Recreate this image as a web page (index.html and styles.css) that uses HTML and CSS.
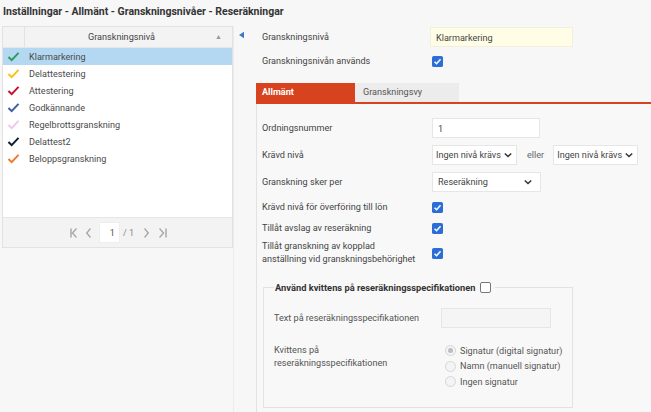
FILE: index.html
```html
<!DOCTYPE html>
<html lang="sv">
<head>
<meta charset="utf-8">
<title>Granskningsnivåer</title>
<link rel="stylesheet" href="styles.css">
</head>
<body>
<div class="title">Inställningar - Allmänt - Granskningsnivåer - Reseräkningar</div>
<div class="layout">
  <div class="left">
    <div class="grid">
      <div class="grid-head">
        <div class="icon-col"></div>
        <div class="head-col">Granskningsnivå<span class="sort">▲</span></div>
      </div>
      <div class="grid-body">
        <div class="row selected"><span class="chk" style="color:#2f9a5d"><svg viewBox="0 0 14 12" width="13" height="11"><path d="M1.5 6.5 L5 10 L12.5 2" fill="none" stroke="currentColor" stroke-width="2.2"/></svg></span>Klarmarkering</div>
        <div class="row"><span class="chk" style="color:#f3c41c"><svg viewBox="0 0 14 12" width="13" height="11"><path d="M1.5 6.5 L5 10 L12.5 2" fill="none" stroke="currentColor" stroke-width="2.2"/></svg></span>Delattestering</div>
        <div class="row"><span class="chk" style="color:#c8102e"><svg viewBox="0 0 14 12" width="13" height="11"><path d="M1.5 6.5 L5 10 L12.5 2" fill="none" stroke="currentColor" stroke-width="2.2"/></svg></span>Attestering</div>
        <div class="row"><span class="chk" style="color:#3c5ea8"><svg viewBox="0 0 14 12" width="13" height="11"><path d="M1.5 6.5 L5 10 L12.5 2" fill="none" stroke="currentColor" stroke-width="2.2"/></svg></span>Godkännande</div>
        <div class="row"><span class="chk" style="color:#f0c8ec"><svg viewBox="0 0 14 12" width="13" height="11"><path d="M1.5 6.5 L5 10 L12.5 2" fill="none" stroke="currentColor" stroke-width="2.2"/></svg></span>Regelbrottsgranskning</div>
        <div class="row"><span class="chk" style="color:#0c1d2b"><svg viewBox="0 0 14 12" width="13" height="11"><path d="M1.5 6.5 L5 10 L12.5 2" fill="none" stroke="currentColor" stroke-width="2.2"/></svg></span>Delattest2</div>
        <div class="row"><span class="chk" style="color:#ef7a2c"><svg viewBox="0 0 14 12" width="13" height="11"><path d="M1.5 6.5 L5 10 L12.5 2" fill="none" stroke="currentColor" stroke-width="2.2"/></svg></span>Beloppsgranskning</div>
      </div>
      <div class="pager">
        <svg class="pg first" viewBox="0 0 7 10" width="7" height="10"><path d="M1 0.5 V9.5 M6.5 0.5 L2.5 5 L6.5 9.5" fill="none" stroke="currentColor" stroke-width="1.5"/></svg>
        <svg class="pg prev" viewBox="0 0 5 10" width="5" height="10"><path d="M4.5 0.5 L0.8 5 L4.5 9.5" fill="none" stroke="currentColor" stroke-width="1.5"/></svg>
        <div class="pg-input">1</div>
        <span class="pg-total">/ 1</span>
        <svg class="pg next" viewBox="0 0 5 10" width="5" height="10"><path d="M0.5 0.5 L4.2 5 L0.5 9.5" fill="none" stroke="currentColor" stroke-width="1.5"/></svg>
        <svg class="pg last" viewBox="0 0 8 10" width="8" height="10"><path d="M7 0.5 V9.5 M0.5 0.5 L4.5 5 L0.5 9.5" fill="none" stroke="currentColor" stroke-width="1.5"/></svg>
      </div>
    </div>
  </div>
  <div class="splitter">
    <svg viewBox="0 0 6 8" width="5" height="8"><path d="M6 0 L0 4 L6 8 Z" fill="#3b78c9"/></svg>
  </div>
  <div class="right">
    <div class="top-form">
      <div class="frow">
        <div class="flabel">Granskningsnivå</div>
        <div class="input yellow">Klarmarkering</div>
      </div>
      <div class="frow">
        <div class="flabel">Granskningsnivån används</div>
        <span class="cb"><svg viewBox="0 0 12 12" width="11" height="11"><rect width="12" height="12" rx="2" fill="#2b6fd6"/><path d="M2.8 6.2 L5 8.4 L9.3 3.6" fill="none" stroke="#fff" stroke-width="1.7"/></svg></span>
      </div>
    </div>
    <div class="tabs">
      <div class="tab active">Allmänt</div>
      <div class="tab">Granskningsvy</div>
    </div>
    <div class="tab-content">
      <div class="crow">
        <div class="clabel">Ordningsnummer</div>
        <div class="input num">1</div>
      </div>
      <div class="crow">
        <div class="clabel">Krävd nivå</div>
        <div class="select s1">Ingen nivå krävs<svg class="chev" viewBox="0 0 10 6" width="8" height="6"><path d="M1 1 L5 5 L9 1" fill="none" stroke="#333" stroke-width="1.8"/></svg></div>
        <span class="eller">eller</span>
        <div class="select s1">Ingen nivå krävs<svg class="chev" viewBox="0 0 10 6" width="8" height="6"><path d="M1 1 L5 5 L9 1" fill="none" stroke="#333" stroke-width="1.8"/></svg></div>
      </div>
      <div class="crow">
        <div class="clabel">Granskning sker per</div>
        <div class="select s2">Reseräkning<svg class="chev" viewBox="0 0 10 6" width="8" height="6"><path d="M1 1 L5 5 L9 1" fill="none" stroke="#333" stroke-width="1.8"/></svg></div>
      </div>
      <div class="crow cbrow first">
        <div class="clabel">Krävd nivå för överföring till lön</div>
        <span class="cb"><svg viewBox="0 0 12 12" width="11" height="11"><rect width="12" height="12" rx="2" fill="#2b6fd6"/><path d="M2.8 6.2 L5 8.4 L9.3 3.6" fill="none" stroke="#fff" stroke-width="1.7"/></svg></span>
      </div>
      <div class="crow cbrow">
        <div class="clabel">Tillåt avslag av reseräkning</div>
        <span class="cb"><svg viewBox="0 0 12 12" width="11" height="11"><rect width="12" height="12" rx="2" fill="#2b6fd6"/><path d="M2.8 6.2 L5 8.4 L9.3 3.6" fill="none" stroke="#fff" stroke-width="1.7"/></svg></span>
      </div>
      <div class="crow cbrow">
        <div class="clabel">Tillåt granskning av kopplad<br>anställning vid granskningsbehörighet</div>
        <span class="cb"><svg viewBox="0 0 12 12" width="11" height="11"><rect width="12" height="12" rx="2" fill="#2b6fd6"/><path d="M2.8 6.2 L5 8.4 L9.3 3.6" fill="none" stroke="#fff" stroke-width="1.7"/></svg></span>
      </div>
      <fieldset class="fs">
        <legend>Använd kvittens på reseräkningsspecifikationen <span class="cb-empty"></span></legend>
        <div class="fsrow">
          <div class="fslabel">Text på reseräkningsspecifikationen</div>
          <div class="input disabled"></div>
        </div>
        <div class="fsrow radios-row">
          <div class="fslabel">Kvittens på<br>reseräkningsspecifikationen</div>
          <div class="radios">
            <div class="radio"><span class="rd on"></span>Signatur (digital signatur)</div>
            <div class="radio"><span class="rd"></span>Namn (manuell signatur)</div>
            <div class="radio"><span class="rd"></span>Ingen signatur</div>
          </div>
        </div>
      </fieldset>
    </div>
  </div>
</div>
</body>
</html>
```

FILE: styles.css
```css
* { box-sizing: border-box; }
html, body { margin: 0; padding: 0; }
body {
  background: #f7f7f7;
  font-family: Roboto, "Liberation Sans", Arial, sans-serif;
  font-size: 9.1px;
  color: #444;
  width: 651px;
  height: 412px;
  overflow: hidden;
}
.title {
  height: 26px;
  padding: 5px 0 0 3px;
  font-size: 10.5px;
  font-weight: 700;
  color: #333;
  white-space: nowrap;
}
.layout {
  display: flex;
  align-items: flex-start;
}
.left {
  width: 233px;
  flex: none;
  padding-left: 2px;
}
.grid {
  border: 1px solid #e2e2e2;
  background: #fff;
  height: 222px;
  display: flex;
  flex-direction: column;
}
.grid-head {
  display: flex;
  height: 21px;
  background: #f3f3f3;
  border-bottom: 1px solid #e6e6e6;
}
.icon-col {
  width: 22px;
  border-right: 1px solid #e2e2e2;
}
.head-col {
  flex: 1;
  display: flex;
  align-items: center;
  justify-content: center;
  padding-right: 14px;
  position: relative;
  color: #444;
}
.sort {
  position: absolute;
  right: 10px;
  top: 6px;
  font-size: 7px;
  color: #999;
}
.grid-body {
  flex: 1;
}
.row {
  height: 17px;
  display: flex;
  align-items: center;
  color: #4a4a4a;
  white-space: nowrap;
}
.row.selected { background: #b4d8f2; }
.chk {
  width: 26px;
  padding-left: 4px;
  display: flex;
  align-items: center;
}
.pager {
  height: 30px;
  background: #f3f3f3;
  border-top: 1px solid #e6e6e6;
  display: flex;
  align-items: center;
  justify-content: center;
  color: #aaa;
  padding-left: 2px;
}
.pg { color: #ababab; flex: none; }
.pg.prev { margin-left: 9px; }
.pg.next { margin-left: 10px; }
.pg.last { margin-left: 10px; }
.pg-input {
  width: 21px;
  height: 21px;
  background: #fff;
  border: 1px solid #eee;
  text-align: right;
  padding: 5px 4px 0 0;
  color: #555;
  margin-left: 8px;
}
.pg-total { color: #888; margin-left: 3px; }
.splitter {
  width: 23px;
  flex: none;
  height: 386px;
  border-left: 1px solid #ececec;
  padding: 5px 0 0 5px;
}
.right {
  flex: 1;
  min-width: 0;
}
.top-form {
  padding-top: 1px;
}
.frow {
  display: flex;
  align-items: center;
  height: 20px;
  margin-bottom: 4px;
}
.flabel {
  width: 174px;
  flex: none;
  padding-left: 6px;
  color: #444;
  white-space: nowrap;
}
.input {
  height: 20px;
  border: 1px solid #e6e6e6;
  background: #fff;
  padding: 5px 5px 0;
  color: #444;
  flex: none;
}
.input.yellow {
  width: 143px;
  background: #fffde6;
  border-color: #f0efe0;
}
.frow .cb { margin-left: 2px; }
.cb { display: inline-flex; flex: none; }
.tabs {
  margin-top: 12px;
  display: flex;
  height: 21px;
  border-bottom: 2px solid #d6431e;
}
.tab {
  height: 19px;
  padding: 4px 0 0 8px;
  background: #ececec;
  color: #555;
  width: 104px;
}
.tab.active {
  width: 99px;
  padding-left: 6px;
  background: #d6431e;
  color: #fff;
  font-weight: 700;
}
.tab-content {
  border-left: 1px solid #e2e2e2;
  padding-top: 14px;
  min-height: 320px;
  background: #f8f8f8;
}
.crow {
  display: flex;
  align-items: center;
  height: 20px;
  margin-bottom: 7px;
}
.clabel {
  width: 175px;
  flex: none;
  padding-left: 5px;
  color: #444;
  white-space: nowrap;
}
.input.num { width: 108px; }
.select {
  height: 20px;
  background: #fff;
  border: 1px solid #e6e6e6;
  display: flex;
  align-items: center;
  justify-content: space-between;
  padding: 0 4px 0 3px;
  color: #444;
  white-space: nowrap;
  flex: none;
}
.select.s1 { width: 85px; }
.select.s2 { width: 109px; padding-left: 5px; padding-right: 8px; }
.chev { flex: none; }
.eller { color: #666; margin: 0 9px 0 10px; }
.crow.cbrow {
  height: auto;
  min-height: 18px;
  margin-bottom: 3px;
}
.crow.cbrow.first { margin-top: -1px; }
.crow.cbrow .clabel {
  line-height: 13px;
}
.fs {
  margin: 16px 0 0 6px;
  width: 308px;
  height: 126px;
  border: 1px solid #e2e2e2;
  padding: 15px 10px 0 10px;
}
.fs legend {
  padding: 0 4px 0 1px;
  font-size: 9.3px;
  font-weight: 700;
  color: #333;
  display: flex;
  align-items: center;
  gap: 5px;
  white-space: nowrap;
}
.cb-empty {
  width: 11px;
  height: 11px;
  border: 1px solid #777;
  border-radius: 2px;
  background: #fff;
  display: inline-block;
}
.fsrow {
  display: flex;
  align-items: center;
}
.fslabel {
  width: 167px;
  flex: none;
  color: #555;
  line-height: 13px;
  white-space: nowrap;
}
.input.disabled {
  width: 110px;
  height: 20px;
  background: #f5f5f5;
  border-color: #e6e6e6;
}
.radios-row {
  margin-top: 14px;
  align-items: flex-start;
}
.radios-row .fslabel { margin-top: 2px; }
.radios { margin-left: 4px; margin-top: 1px; }
.radio {
  display: flex;
  align-items: center;
  height: 15.5px;
  color: #555;
  white-space: nowrap;
}
.rd {
  width: 11px;
  height: 11px;
  border-radius: 50%;
  border: 1px solid #d6d6d6;
  background: #f4f4f4;
  margin-right: 4px;
  display: inline-flex;
  align-items: center;
  justify-content: center;
  flex: none;
}
.rd.on::after {
  content: "";
  width: 5px;
  height: 5px;
  border-radius: 50%;
  background: #bdbdbd;
}
```
